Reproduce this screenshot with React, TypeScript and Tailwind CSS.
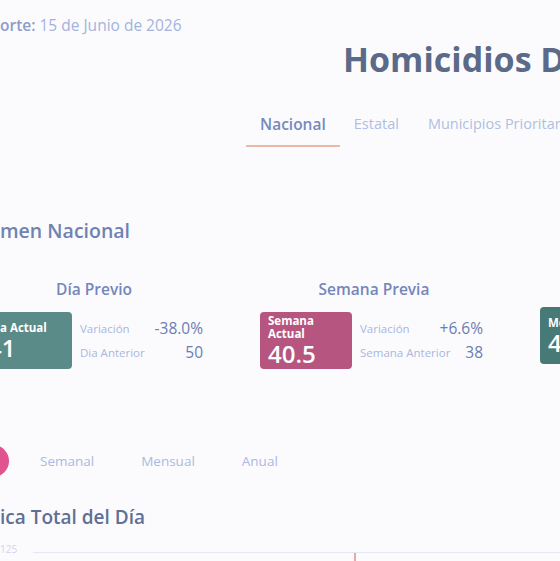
import React from 'react'

const stats = [
  {
    title: 'Día Previo',
    label: ['Dia Actual'],
    value: '41',
    card: 'bg-[#5b8b88]',
    rows: [
      { k: 'Variación', v: '-38.0%' },
      { k: 'Dia Anterior', v: '50' },
    ],
  },
  {
    title: 'Semana Previa',
    label: ['Semana', 'Actual'],
    value: '40.5',
    card: 'bg-[#b65580]',
    rows: [
      { k: 'Variación', v: '+6.6%' },
      { k: 'Semana Anterior', v: '38' },
    ],
  },
  {
    title: 'Mes Previo',
    label: ['Mes Actual'],
    value: '42.3',
    card: 'bg-[#477a76]',
    rows: [
      { k: 'Variación', v: '+4.1%' },
      { k: 'Mes Anterior', v: '40.6' },
    ],
  },
]

function StatGroup({ s, last }: { s: (typeof stats)[number]; last?: boolean }) {
  return (
    <div className={`w-[223px] shrink-0 flex flex-col ${last ? '-mt-[5px]' : ''}`}>
      <p className="pl-[5px] text-center text-[15.5px] leading-[20px] font-semibold text-[#7486ba]">{s.title}</p>
      <div className="mt-[13px] flex items-center gap-[8px]">
        <div className={`w-[92px] h-[57px] shrink-0 rounded-[4px] ${s.card} px-[8px] flex flex-col justify-center text-white overflow-hidden`}>
          {s.label.map(l => (
            <span key={l} className="text-[11.5px] leading-[13px] font-bold">
              {l}
            </span>
          ))}
          <span className="text-[24px] leading-[27px] font-semibold">{s.value}</span>
        </div>
        <div className="flex-1 flex flex-col">
          {s.rows.map(r => (
            <div key={r.k} className="h-[24px] flex items-center justify-between">
              <span className="text-[11.5px] text-[#a9b7de]">{r.k}</span>
              <span className="text-[15.5px] text-[#6b7db3]">{r.v}</span>
            </div>
          ))}
        </div>
      </div>
    </div>
  )
}

export default function App() {
  return (
    <div
      className="w-[560px] h-[561px] overflow-hidden bg-[#fbfbfd] whitespace-nowrap"
      style={{ fontFamily: '"Open Sans", "Noto Sans", sans-serif' }}
    >
      {/* report date */}
      <p className="pt-[15px] text-[15.5px] leading-[20px] text-[#a4b3dc]">
        <span className="font-semibold text-[#8b9dcc]">orte:</span> 15 de Junio de 2026
      </p>

      <h1 className="mt-[4px] pl-[343px] text-[34px] leading-[40px] font-bold text-[#5b6a88]">
        Homicidios Dolosos
      </h1>

      {/* scope tabs */}
      <nav className="mt-[35px] pl-[246px] flex items-end text-[14.5px] leading-[20px]">
        <span className="px-[14px] pb-[11px] border-b-2 border-[#ecb8a8] text-[15.5px] font-semibold text-[#7689bd]">Nacional</span>
        <span className="px-[14px] pb-[13px] text-[#b0bee2]">Estatal</span>
        <span className="px-[15px] pb-[13px] text-[#b0bee2]">Municipios Prioritarios</span>
      </nav>

      <h2 className="mt-[71px] text-[19.5px] leading-[26px] font-semibold text-[#6f82b2]">men Nacional</h2>

      <div className="mt-[35px] -ml-[20px] flex items-start gap-[57px]">
        {stats.map((s, i) => (
          <StatGroup key={s.title} s={s} last={i === stats.length - 1} />
        ))}
      </div>

      {/* period tabs */}
      <div className="mt-[76px] -ml-[71px] flex items-center gap-[15px] text-[13.5px] leading-[18px]">
        <span className="w-[80px] h-[32px] rounded-full bg-[#e0538f] text-white flex items-center justify-center">Diario</span>
        <span className="px-[16px] text-[#abb9e0]">Semanal</span>
        <span className="px-[16px] text-[#abb9e0]">Mensual</span>
        <span className="px-[16px] text-[#abb9e0]">Anual</span>
      </div>

      <h2 className="mt-[27px] text-[19px] leading-[26px] font-semibold text-[#5f6f95]">ica Total del Día</h2>

      {/* chart axis */}
      <div className="mt-[13px] flex items-start">
        <span className="w-[33px] text-[10px] leading-[12px] text-[#cdd5ea]">125</span>
        <div className="flex-1 mt-[9px] border-t border-[#e4e8f2]">
          <div className="ml-[321px] w-[2px] h-[10px] bg-[#eaa7a7]" />
        </div>
      </div>
    </div>
  )
}
